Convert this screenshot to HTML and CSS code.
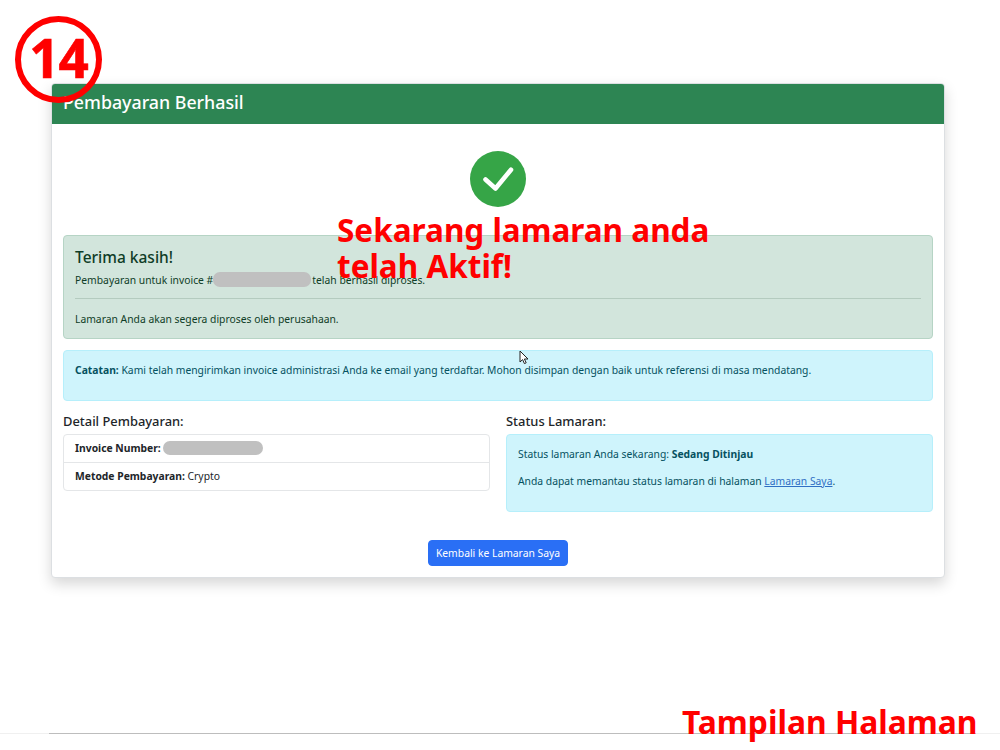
FILE: index.html
```html
<!DOCTYPE html>
<html lang="id">
  <head>
    <meta charset="UTF-8" />
    <title>Pembayaran Berhasil</title>
    <link rel="stylesheet" href="styles.css">
  </head>
  <body>
    <div class="container">
      <div class="card">
        <div class="card-header">Pembayaran Berhasil</div>
        <div class="card-body">
          <div class="success-icon">
            <svg width="56" height="56" viewBox="0 0 56 56">
              <circle cx="28" cy="28" r="28" fill="#36a547" />
              <path d="M15.5 28.5 L25.5 37.5 L41 18.8" fill="none" stroke="#fff" stroke-width="4.6" stroke-linecap="round" stroke-linejoin="round" />
            </svg>
          </div>

          <div class="alert alert-success">
            <h4>Terima kasih!</h4>
            <p>Pembayaran untuk invoice #<span class="redact redact-wide"></span>telah berhasil diproses.</p>
            <hr />
            <p>Lamaran Anda akan segera diproses oleh perusahaan.</p>
          </div>

          <div class="alert alert-info alert-note">
            <p><strong>Catatan:</strong> Kami telah mengirimkan invoice administrasi Anda ke email yang terdaftar. Mohon disimpan dengan baik untuk referensi di masa mendatang.</p>
          </div>

          <div class="row">
            <div class="col">
              <h5>Detail Pembayaran:</h5>
              <ul class="list-group">
                <li><strong>Invoice Number:</strong> <span class="redact"></span></li>
                <li><strong>Metode Pembayaran:</strong> Crypto</li>
              </ul>
            </div>
            <div class="col">
              <h5>Status Lamaran:</h5>
              <div class="alert alert-info alert-status">
                <p>Status lamaran Anda sekarang: <strong>Sedang Ditinjau</strong></p>
                <p>Anda dapat memantau status lamaran di halaman <a href="#">Lamaran Saya</a>.</p>
              </div>
            </div>
          </div>

          <div class="actions">
            <a class="btn" href="#">Kembali ke Lamaran Saya</a>
          </div>
        </div>
      </div>
    </div>

    <!-- annotations on top of the screenshot -->
    <div class="step-badge">14</div>
    <div class="note-big">Sekarang lamaran anda<br />telah Aktif!</div>
    <div class="page-line"></div>
    <div class="note-bottom">Tampilan Halaman</div>
    <svg class="cursor" width="11" height="15" viewBox="0 0 11 15">
      <path d="M1 1 L1 12 L3.6 9.6 L5.4 13.6 L7.2 12.8 L5.4 9 L9 9 Z" fill="#fff" stroke="#222" stroke-width="1" />
    </svg>
  </body>
</html>
```

FILE: styles.css
```css
* {
  margin: 0;
  padding: 0;
  box-sizing: border-box;
}
body {
  font-family: "Noto Sans", "Open Sans", Arial, sans-serif;
  background: #fff;
  color: #212529;
  font-size: 10.33px;
  line-height: 1.5;
  min-height: 750px;
  overflow: hidden;
}
.container {
  padding: 83px 55px 0 51px;
}
.card {
  background: #fff;
  border: 1px solid #dcdfe2;
  border-radius: 4px;
  box-shadow: 0 6px 14px rgba(0, 0, 0, 0.16);
}
.card-header {
  background: #2d8553;
  color: #fff;
  height: 40px;
  padding: 0 11px;
  font-size: 17.8px;
  font-weight: 500;
  line-height: 36px;
  border-radius: 3px 3px 0 0;
}
.card-body {
  padding: 27px 11px 11px;
}
.success-icon {
  display: flex;
  justify-content: center;
  height: 56px;
  margin-bottom: 28px;
}
.alert {
  border: 1px solid;
  border-radius: 4px;
  padding: 11px;
}
.alert-success {
  background: #d2e5dc;
  border-color: #b6d4c5;
  color: #0f3d27;
  height: 104px;
  padding-top: 10px;
  margin-bottom: 11px;
}
.alert-success h4 {
  font-size: 15.5px;
  font-weight: 500;
  line-height: 22px;
  margin-bottom: 4px;
}
.alert-success p {
  line-height: 16px;
}
.alert-success hr {
  border: none;
  border-top: 1px solid #b4cbbf;
  margin: 10px 0 12px;
}
.alert-info {
  background: #cff4fc;
  border-color: #b6effb;
  color: #055160;
}
.alert-note {
  height: 51px;
  padding-top: 12px;
  margin-bottom: 12px;
}
.row {
  display: flex;
  gap: 16px;
}
.col {
  flex: 1;
}
h5 {
  font-size: 12.9px;
  font-weight: 500;
  line-height: 16px;
  margin-bottom: 5px;
}
.list-group {
  list-style: none;
  border: 1px solid #e4e6e8;
  border-radius: 4px;
}
.list-group li {
  height: 27px;
  padding: 0 11px;
  line-height: 27px;
}
.list-group li + li {
  height: 28px;
  border-top: 1px solid #e4e6e8;
}
.alert-status {
  height: 78px;
  padding: 11px;
}
.alert-status p {
  line-height: 16px;
  margin-bottom: 11px;
}
.alert-status a {
  color: #2f6fc4;
}
.redact {
  display: inline-block;
  width: 100px;
  height: 14px;
  border-radius: 7px;
  background: #c0c0c0;
  vertical-align: -3px;
  filter: blur(0.5px);
}
.redact-wide {
  width: 98px;
  height: 15px;
  margin-right: 1px;
}
.actions {
  display: flex;
  justify-content: center;
  margin-top: 28px;
}
.btn {
  display: block;
  width: 140px;
  height: 26px;
  line-height: 24px;
  text-align: center;
  background: #2a6ff5;
  border: 1px solid #2a6ff5;
  border-radius: 4px;
  color: #fff;
  text-decoration: none;
}
.step-badge {
  position: absolute;
  left: 15px;
  top: 16px;
  width: 87px;
  height: 87px;
  border: 6px solid #f00;
  border-radius: 50%;
  color: #f00;
  font-size: 53px;
  font-weight: 700;
  line-height: 72px;
  text-align: center;
  letter-spacing: -1px;
  -webkit-text-stroke: 0.6px #f00;
}
.note-big {
  position: absolute;
  left: 337px;
  top: 212px;
  color: #f00;
  font-size: 31.5px;
  font-weight: 700;
  line-height: 36px;
  white-space: nowrap;
}
.note-bottom {
  position: absolute;
  left: 682px;
  top: 702px;
  color: #f00;
  font-size: 31.8px;
  font-weight: 700;
  line-height: 40px;
  white-space: nowrap;
}
.page-line {
  position: absolute;
  left: 0;
  top: 733px;
  width: 100%;
  height: 1px;
  background: linear-gradient(to right, #f0f0f0 49px, #bdbdbd 49px, #bdbdbd 976px, #f0f0f0 976px);
}
.cursor {
  position: absolute;
  left: 519px;
  top: 350px;
}
```
